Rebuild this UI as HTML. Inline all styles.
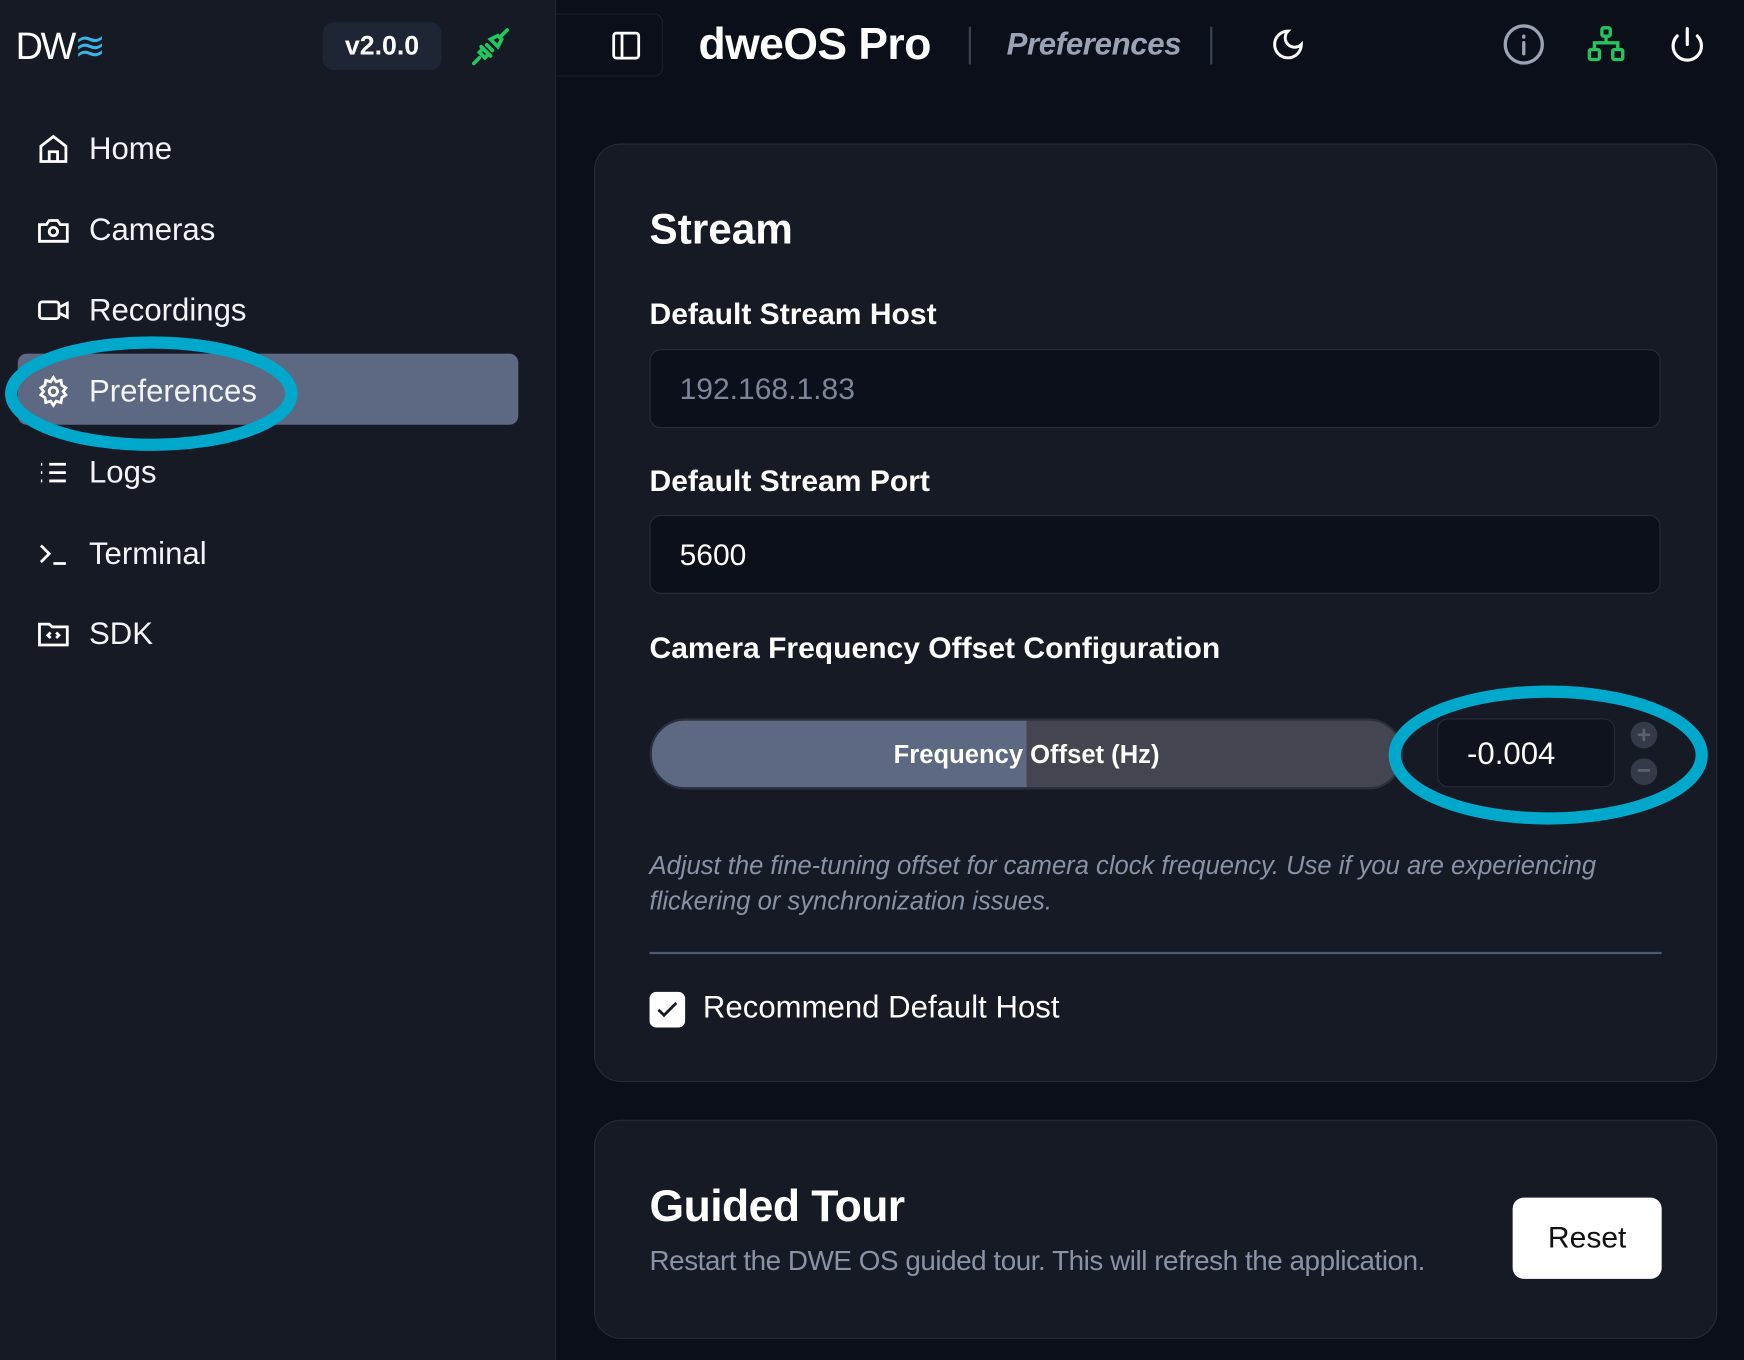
<!DOCTYPE html>
<html><head><meta charset="utf-8"><style>
*{box-sizing:border-box;margin:0;padding:0}
html,body{width:1744px;height:1360px;overflow:hidden;background:#0b0f19;font-family:"Liberation Sans",sans-serif;color:#fff}
#w{position:absolute;left:0;top:0;width:1568px;height:1223px;transform:scale(1.11224,1.11202);transform-origin:0 0;background:#0b0f19}
.a{position:absolute;white-space:nowrap}
.side{position:absolute;left:0;top:0;width:500px;height:1223px;background:#151a25;border-right:1px solid #1f2533}
.nav{position:absolute;left:80px;font-size:28px;color:#f2f4f8;transform:translateY(-50%)}
.ic{position:absolute;left:33px;width:30px;height:30px;transform:translateY(-50%)}
.card{position:absolute;left:534px;width:1010px;background:#151a25;border:1px solid #242b3a;border-radius:24px}
.lbl{position:absolute;left:584px;font-size:27px;font-weight:bold;transform:translateY(-50%)}
.inp{position:absolute;left:584px;width:909px;height:71px;background:#0c101a;border:1px solid #262d3b;border-radius:10px;font-size:27px;padding-left:26px;line-height:71px}
</style></head><body><div id="w">
<div class="side"></div>
<div class="a" style="left:14px;top:22px;font-size:34px;letter-spacing:-2px;color:#fff">DW<span style="color:#38b6e6">≋</span></div>
<div class="a" style="left:290px;top:20px;width:107px;height:43px;background:#1e2535;border-radius:10px;font-size:24px;font-weight:bold;text-align:center;line-height:43px">v2.0.0</div>
<svg class="a" style="left:420px;top:22px" width="42" height="40" viewBox="0 0 24 24" fill="none" stroke="#22c55e" stroke-width="2" stroke-linecap="round"><path d="M3 21l3-3M21 3l-3 3M8 13l-2 2 3 3 2-2M10 11l3 3M12 8l4-2 2 2-2 4-4-4zM7 12l5 5"/></svg>
<div class="a" style="left:500px;top:12px;width:96px;height:57px;border:1px solid #1c2230;border-left:none;border-radius:0 8px 8px 0;background:#0b0f19"></div>
<svg class="a" style="left:548px;top:26px" width="30" height="30" viewBox="0 0 24 24" fill="none" stroke="#fff" stroke-width="2"><rect x="3" y="3" width="18" height="18" rx="2"/><path d="M9 3v18"/></svg>
<div class="a" style="left:628px;top:18px;font-size:40px;font-weight:bold;letter-spacing:-0.5px">dweOS Pro</div>
<div class="a" style="left:871px;top:24px;width:2px;height:34px;background:#3a4152"></div>
<div class="a" style="left:905px;top:24px;font-size:28px;font-weight:bold;font-style:italic;color:#9aa3b5;letter-spacing:-0.3px">Preferences</div>
<div class="a" style="left:1088px;top:24px;width:2px;height:34px;background:#3a4152"></div>
<svg class="a" style="left:1142px;top:24px" width="32" height="32" viewBox="0 0 24 24" fill="none" stroke="#fff" stroke-width="2"><path d="M12 3a6 6 0 0 0 9 9 9 9 0 1 1-9-9z"/></svg>
<svg class="a" style="left:1350px;top:20px" width="40" height="40" viewBox="0 0 24 24" fill="none" stroke="#9ca3b4" stroke-width="1.8" stroke-linecap="round"><circle cx="12" cy="12" r="10"/><path d="M12 11v6M12 7.5v.5"/></svg>
<svg class="a" style="left:1426px;top:22px" width="36" height="36" viewBox="0 0 24 24" fill="none" stroke="#22c55e" stroke-width="2"><rect x="9.5" y="2" width="5" height="5" rx="1"/><rect x="2" y="15" width="6" height="6" rx="1"/><rect x="16" y="15" width="6" height="6" rx="1"/><path d="M12 7v4M5 15v-4h14v4"/></svg>
<svg class="a" style="left:1500px;top:22px" width="34" height="36" viewBox="0 0 24 24" fill="none" stroke="#fff" stroke-width="2" stroke-linecap="round"><path d="M12 2v10M18.4 6.6a9 9 0 1 1-12.8 0"/></svg>

<div class="a" style="left:16px;top:318px;width:450px;height:64px;background:#5d6882;border-radius:8px"></div>
<svg class="ic" style="top:134px" viewBox="0 0 24 24" fill="none" stroke="#fff" stroke-width="2"><path d="M3 10l9-7 9 7v11H3z"/><path d="M9 21v-7h6v7"/></svg>
<div class="nav" style="top:134px">Home</div>
<svg class="ic" style="top:207px" viewBox="0 0 24 24" fill="none" stroke="#fff" stroke-width="2"><path d="M2 8h5l2-3h6l2 3h5v12H2z"/><circle cx="12" cy="13" r="3"/></svg>
<div class="nav" style="top:207px">Cameras</div>
<svg class="ic" style="top:279px" viewBox="0 0 24 24" fill="none" stroke="#fff" stroke-width="2"><rect x="2" y="6" width="14" height="12" rx="2"/><path d="M16 10l6-3v10l-6-3"/></svg>
<div class="nav" style="top:279px">Recordings</div>
<svg class="ic" style="top:352px" viewBox="0 0 24 24" fill="none" stroke="#fff" stroke-width="2"><circle cx="12" cy="12" r="3"/><path d="M12 2l2 3 3.5-1 .5 3.5 3 2-2 2.5 2 2.5-3 2-.5 3.5-3.5-1-2 3-2-3-3.5 1-.5-3.5-3-2 2-2.5-2-2.5 3-2 .5-3.5 3.5 1z"/></svg>
<div class="nav" style="top:352px">Preferences</div>
<svg class="ic" style="top:425px" viewBox="0 0 24 24" fill="none" stroke="#fff" stroke-width="2"><path d="M9 6h12M9 12h12M9 18h12M3 6h1M3 12h1M3 18h1"/></svg>
<div class="nav" style="top:425px">Logs</div>
<svg class="ic" style="top:498px" viewBox="0 0 24 24" fill="none" stroke="#fff" stroke-width="2"><path d="M3 6l6 6-6 6M12 19h9"/></svg>
<div class="nav" style="top:498px">Terminal</div>
<svg class="ic" style="top:570px" viewBox="0 0 24 24" fill="none" stroke="#fff" stroke-width="2"><path d="M2 5h7l2 2h11v13H2z"/><path d="M10 11l-2 2 2 2M14 11l2 2-2 2"/></svg>
<div class="nav" style="top:570px">SDK</div>

<div class="card" style="top:129px;height:844px"></div>
<div class="a" style="left:584px;top:186px;font-size:38px;font-weight:bold">Stream</div>
<div class="lbl" style="top:283px">Default Stream Host</div>
<div class="inp" style="top:314px;color:#7d8597">192.168.1.83</div>
<div class="lbl" style="top:433px">Default Stream Port</div>
<div class="inp" style="top:463px;color:#fff">5600</div>
<div class="lbl" style="top:583px">Camera Frequency Offset Configuration</div>
<div class="a" style="left:584px;top:646px;width:678px;height:64px;border-radius:32px;overflow:hidden;border:2px solid #2a303d;background:linear-gradient(90deg,#5d6882 0,#5d6882 50%,#434650 50%)"></div>
<div class="a" style="left:584px;top:646px;width:678px;height:64px;line-height:64px;text-align:center;font-size:23px;font-weight:bold">Frequency Offset (Hz)</div>
<div class="a" style="left:1292px;top:646px;width:160px;height:62px;border:1px solid #262d3b;border-radius:10px;background:#0f131d;font-size:28px;line-height:62px;padding-left:26px">-0.004</div>
<div class="a" style="left:1466px;top:649px;width:24px;height:24px;border-radius:50%;background:#343a48;color:#5b6272;font-size:22px;line-height:24px;text-align:center;font-weight:bold">+</div>
<div class="a" style="left:1466px;top:682px;width:24px;height:24px;border-radius:50%;background:#343a48;color:#5b6272;font-size:22px;line-height:22px;text-align:center;font-weight:bold">−</div>
<div class="a" style="left:584px;top:762px;font-size:23px;font-style:italic;color:#8a93a6;line-height:32px">Adjust the fine-tuning offset for camera clock frequency. Use if you are experiencing<br>flickering or synchronization issues.</div>
<div class="a" style="left:584px;top:856px;width:910px;height:2px;background:#4e5875"></div>
<div class="a" style="left:584px;top:892px;width:32px;height:32px;background:#fff;border-radius:6px"></div>
<svg class="a" style="left:588px;top:896px" width="24" height="24" viewBox="0 0 24 24" fill="none" stroke="#151a25" stroke-width="2.5"><path d="M4 12l5 5 11-11"/></svg>
<div class="a" style="left:632px;top:890px;font-size:28px">Recommend Default Host</div>

<div class="card" style="top:1007px;height:197px"></div>
<div class="a" style="left:584px;top:1063px;font-size:40px;font-weight:bold;letter-spacing:-0.5px">Guided Tour</div>
<div class="a" style="left:584px;top:1120px;font-size:25px;letter-spacing:-0.4px;color:#8a93a6">Restart the DWE OS guided tour. This will refresh the application.</div>
<div class="a" style="left:1360px;top:1077px;width:134px;height:73px;background:#fff;border-radius:10px;color:#111;font-size:27px;text-align:center;line-height:73px">Reset</div>

<svg class="a" style="left:0;top:0" width="1568" height="1223"><ellipse cx="136" cy="354" rx="126" ry="46" fill="none" stroke="#00a9cc" stroke-width="11"/><ellipse cx="1392" cy="679" rx="138" ry="57" fill="none" stroke="#00a9cc" stroke-width="11"/></svg>
</div></body></html>
